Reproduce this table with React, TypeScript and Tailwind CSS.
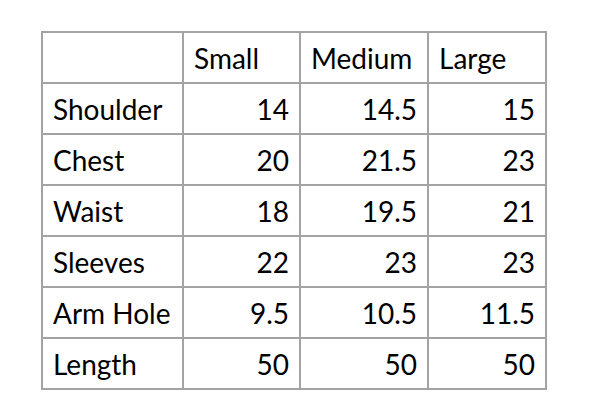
const sizes = ["Small", "Medium", "Large"];

const rows: [string, string, string, string][] = [
  ["Shoulder", "14", "14.5", "15"],
  ["Chest", "20", "21.5", "23"],
  ["Waist", "18", "19.5", "21"],
  ["Sleeves", "22", "23", "23"],
  ["Arm Hole", "9.5", "10.5", "11.5"],
  ["Length", "50", "50", "50"],
];

const cell = "border-2 border-[#a3a3a3] px-[10px] h-[51px] align-middle";

export default function App() {
  return (
    <div className="w-[612px] h-[407px] bg-white pl-[41px] pt-[31px] text-black font-['Lato',sans-serif] text-[28px]">
      <table className="border-collapse table-fixed">
        <colgroup>
          <col className="w-[141px]" />
          <col className="w-[117px]" />
          <col className="w-[128px]" />
          <col className="w-[118px]" />
        </colgroup>
        <thead>
          <tr>
            <th className={cell}></th>
            {sizes.map((s) => (
              <th key={s} className={`${cell} text-left font-normal`}>
                {s}
              </th>
            ))}
          </tr>
        </thead>
        <tbody>
          {rows.map((r) => (
            <tr key={r[0]}>
              <td className={`${cell} text-left`}>{r[0]}</td>
              <td className={`${cell} text-right`}>{r[1]}</td>
              <td className={`${cell} text-right`}>{r[2]}</td>
              <td className={`${cell} text-right`}>{r[3]}</td>
            </tr>
          ))}
        </tbody>
      </table>
    </div>
  );
}
